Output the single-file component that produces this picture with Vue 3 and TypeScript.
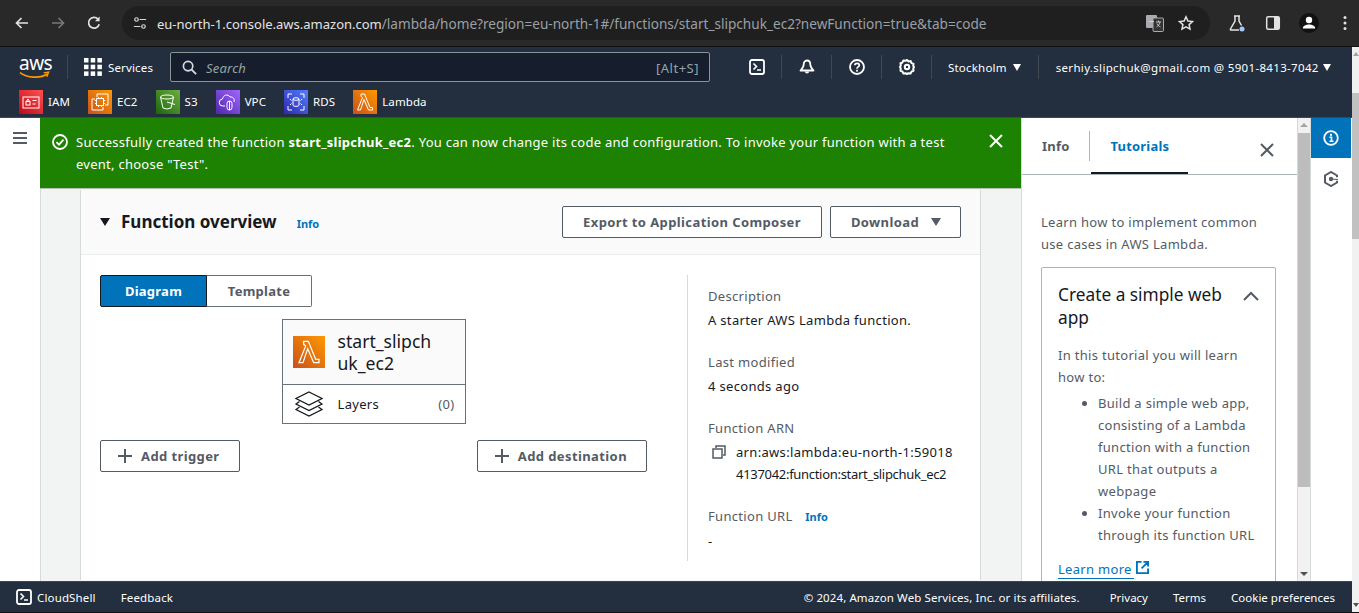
<script setup lang="ts">
interface Shortcut {
  name: string
  from: string
  to: string
  icon: string
}

const shortcuts: Shortcut[] = [
  { name: 'IAM', from: '#bd0816', to: '#ff5252', icon: 'iam' },
  { name: 'EC2', from: '#c8511b', to: '#ff9900', icon: 'ec2' },
  { name: 'S3', from: '#1b660f', to: '#6cae3e', icon: 's3' },
  { name: 'VPC', from: '#4d27a8', to: '#a166ff', icon: 'vpc' },
  { name: 'RDS', from: '#2e27ad', to: '#527fff', icon: 'rds' },
  { name: 'Lambda', from: '#c8511b', to: '#ff9900', icon: 'lambda' }
]

const details = [
  { label: 'Description', value: 'A starter AWS Lambda function.' },
  { label: 'Last modified', value: '4 seconds ago' }
]

const steps = [
  'Build a simple web app, consisting of a Lambda function with a function URL that outputs a webpage',
  'Invoke your function through its function URL'
]
</script>

<template>
  <div class="window">
    <!-- BROWSER -->
    <header class="browser">
      <svg class="b-icon" viewBox="0 0 16 16"><path d="M14 8H3M7.5 3 2.5 8l5 5" fill="none" stroke="#e3e3e3" stroke-width="1.7" /></svg>
      <svg class="b-icon" viewBox="0 0 16 16"><path d="M2 8h11M8.5 3l5 5-5 5" fill="none" stroke="#77787a" stroke-width="1.7" /></svg>
      <svg class="b-icon" viewBox="0 0 16 16"><path d="M13.2 9.2A5.4 5.4 0 1 1 12 4.1" fill="none" stroke="#e3e3e3" stroke-width="1.7" /><path d="M13.6 1.6v4.6H9z" fill="#e3e3e3" /></svg>
      <div class="omnibox">
        <svg class="tune" viewBox="0 0 16 16"><circle cx="4" cy="4" r="2" fill="none" stroke="#d5d5d5" stroke-width="1.4" /><path d="M7.5 4H15M1 12h7.5" stroke="#d5d5d5" stroke-width="1.4" /><circle cx="12" cy="12" r="2" fill="none" stroke="#d5d5d5" stroke-width="1.4" /></svg>
        <span class="url"><span class="host">eu-north-1.console.aws.amazon.com</span>/lambda/home?region=eu-north-1#/functions/start_slipchuk_ec2?newFunction=true&amp;tab=code</span>
        <svg class="translate" viewBox="0 0 18 18"><rect x="0" y="1" width="11" height="13" rx="1" fill="#a9abae" /><rect x="7" y="4" width="10.500" height="13.500" rx="1" fill="#333" stroke="#a9abae" /><path d="M3 7.500h5M10 8h5M12.500 6.500v1.500M14 8c-.5 2.500-2 4-3.500 5M11 9.500c.7 1.500 2 3 3.500 3.500" fill="none" stroke="#d5d5d5" stroke-width=".9" /></svg>
        <svg class="star" viewBox="0 0 16 16"><path d="m8 1.800 1.900 4.200 4.600.5-3.400 3.100.9 4.500L8 11.800l-4 2.300.9-4.500L1.500 6.500 6.100 6z" fill="none" stroke="#e3e3e3" stroke-width="1.500" /></svg>
      </div>
      <div class="b-tools">
        <svg class="flask" viewBox="0 0 18 18"><path d="M6 2h6M7 2v5l-4.500 8q-.4 1 .7 1H11M11 2v5l2.500 4.500" fill="none" stroke="#e3e3e3" stroke-width="1.500" /><circle cx="14" cy="15" r="2.500" fill="#a8c7fa" /></svg>
        <svg class="side" viewBox="0 0 16 16"><rect x="1.700" y="1.700" width="12.600" height="12.600" rx="1.500" fill="none" stroke="#e3e3e3" stroke-width="1.500" /><rect x="9" y="2" width="5" height="12" fill="#e3e3e3" /></svg>
        <span class="avatar"><svg viewBox="0 0 20 20"><circle cx="10" cy="7" r="3.200" fill="#fff" /><path d="M3.800 15.500c0-2.800 3.500-3.900 6.200-3.900s6.200 1.100 6.200 3.900z" fill="#fff" /></svg></span>
        <svg class="dots" viewBox="0 0 4 16"><circle cx="2" cy="2.500" r="1.500" fill="#e3e3e3" /><circle cx="2" cy="8" r="1.500" fill="#e3e3e3" /><circle cx="2" cy="13.500" r="1.500" fill="#e3e3e3" /></svg>
      </div>
    </header>

    <div class="console">
      <div class="page">
        <!-- TOP NAV -->
        <nav class="topnav">
          <div class="nav-row">
            <div class="logo">
              <span class="logo-text">aws</span>
              <svg class="smile" viewBox="0 0 32 9"><path d="M1 1.500C8 7 22 8 29 3" fill="none" stroke="#f90" stroke-width="1.800" /><path d="m25.500 1.800 5-.8-1.800 4.800" fill="none" stroke="#f90" stroke-width="1.500" /></svg>
            </div>
            <span class="nav-sep first"></span>
            <svg class="grid-icon" viewBox="0 0 18 18"><g fill="#fff"><rect width="4.500" height="4.500" /><rect x="6.700" width="4.500" height="4.500" /><rect x="13.400" width="4.500" height="4.500" /><rect y="6.700" width="4.500" height="4.500" /><rect x="6.700" y="6.700" width="4.500" height="4.500" /><rect x="13.400" y="6.700" width="4.500" height="4.500" /><rect y="13.400" width="4.500" height="4.500" /><rect x="6.700" y="13.400" width="4.500" height="4.500" /><rect x="13.400" y="13.400" width="4.500" height="4.500" /></g></svg>
            <span class="nav-text services">Services</span>
            <div class="search">
              <svg class="search-icon" viewBox="0 0 16 16"><circle cx="6.500" cy="6.500" r="5" fill="none" stroke="#d5dbdb" stroke-width="1.800" /><path d="m10 10 5 5" stroke="#d5dbdb" stroke-width="2" /></svg>
              <span class="search-text">Search</span>
              <span class="search-key">[Alt+S]</span>
            </div>
            <svg class="nav-icon" viewBox="0 0 16 16"><rect x="1" y="1" width="14" height="14" rx="2" fill="none" stroke="#fff" stroke-width="1.800" /><path d="m4.500 4.500 3 3-3 3M8 11h4" fill="none" stroke="#fff" stroke-width="1.600" /></svg>
            <span class="nav-sep"></span>
            <svg class="nav-icon" viewBox="0 0 16 16"><path d="M8 1.500c-2.300 0-3.300 1.800-3.300 4 0 2-1.200 3.800-3.200 6h13c-2-2.200-3.200-4-3.200-6 0-2.200-1-4-3.300-4z" fill="none" stroke="#fff" stroke-width="1.800" stroke-linejoin="round" /><path d="M5.800 12.500c.3 2.600 4.100 2.600 4.400 0z" fill="#fff" /></svg>
            <span class="nav-sep"></span>
            <svg class="nav-icon" viewBox="0 0 16 16"><circle cx="8" cy="8" r="7" fill="none" stroke="#fff" stroke-width="1.800" /><path d="M5.800 6.200C5.800 3.700 10.300 3.700 10.300 6.200c0 1.800-2.300 1.700-2.300 3.600" fill="none" stroke="#fff" stroke-width="1.700" /><rect x="7.100" y="10.800" width="1.800" height="1.800" fill="#fff" /></svg>
            <span class="nav-sep"></span>
            <svg class="nav-icon" viewBox="0 0 16 16"><path d="m8 1 1.600 1.400 2.100-.3.800 2 2 .8-.3 2.100L15 8l-.8 1.600.3 2.100-2 .8-.8 2-2.100-.3L8 15l-1.600-.8-2.100.3-.8-2-2-.8.3-2.100L1 8l.8-1.600-.3-2.100 2-.8.8-2 2.100.3z" fill="none" stroke="#fff" stroke-width="2" stroke-linejoin="round" /><circle cx="8" cy="8" r="2.200" fill="none" stroke="#fff" stroke-width="2" /></svg>
            <span class="nav-sep"></span>
            <span class="nav-text region">Stockholm</span>
            <span class="caret"></span>
            <span class="nav-sep account-sep"></span>
            <span class="nav-text account">serhiy.slipchuk@gmail.com @ 5901-8413-7042</span>
            <span class="caret last"></span>
          </div>
          <div class="shortcuts">
            <div v-for="item in shortcuts" :key="item.name" class="shortcut">
              <span class="service-icon" :style="{ background: `linear-gradient(45deg, ${item.from}, ${item.to})` }">
                <svg viewBox="0 0 24 24" fill="none" stroke="#fff" stroke-width="1">
                  <template v-if="item.icon === 'iam'">
                    <rect x="4" y="7" width="16" height="11" /><rect x="7" y="11.500" width="4" height="3.500" /><path d="M8 11.500V10q1-1.500 2 0v1.500M13.500 10.500h4M13.500 14h3" />
                  </template>
                  <template v-else-if="item.icon === 'ec2'">
                    <path d="M9 7V4h11v11h-3M7 9H4v11h11v-3" /><rect x="8.500" y="8.500" width="7" height="7" /><path d="M7 10.500h1.500M7 13.500h1.500M15.500 10.500H17M15.500 13.500H17M10.500 7v1.500M13.500 7v1.500M10.500 15.500V17M13.500 15.500V17" />
                  </template>
                  <template v-else-if="item.icon === 's3'">
                    <ellipse cx="11" cy="7" rx="6.500" ry="2" /><path d="M4.500 7 7 18q4 2 8 0l2.500-11M11 12l8 2.500" />
                  </template>
                  <template v-else-if="item.icon === 'vpc'">
                    <path d="M9 16H7a3.500 3.500 0 0 1-.5-7C7 5 12 3.500 14 7c3-.5 5 2 4 5" /><rect x="11" y="11" width="5" height="9" rx="2.500" /><path d="M13.500 11v9" />
                  </template>
                  <template v-else-if="item.icon === 'rds'">
                    <path d="M4 8V4h4M16 4h4v4M20 16v4h-4M8 20H4v-4" /><ellipse cx="12" cy="9" rx="3" ry="1.300" /><path d="M9 9v6c0 1.800 6 1.800 6 0V9M6 9l1.500 1.500M18 9l-1.500 1.500M6 15l1.500-1.500M18 15l-1.500-1.500" />
                  </template>
                  <path v-else d="M8 4h3.500L17 17.500h2.500V20h-4L11 9.500 7.500 20H4.500l5-12.500L8.500 6.500H8z" />
                </svg>
              </span>
              <span class="nav-text">{{ item.name }}</span>
            </div>
          </div>
        </nav>

        <div class="body">
          <aside class="sidenav">
            <svg class="burger" viewBox="0 0 14 12"><path d="M0 1h14M0 6h14M0 11h14" stroke="#545b64" stroke-width="2" /></svg>
          </aside>

          <main class="content">
            <div class="flash">
              <svg class="flash-icon" viewBox="0 0 16 16"><circle cx="8" cy="8" r="7" fill="none" stroke="#fff" stroke-width="1.800" /><path d="m4.500 8.200 2.500 2.500 4.500-5" fill="none" stroke="#fff" stroke-width="1.800" /></svg>
              <p>Successfully created the function <b>start_slipchuk_ec2</b>. You can now change its code and configuration. To invoke your function with a test event, choose "Test".</p>
              <svg class="flash-close" viewBox="0 0 14 14"><path d="m1 1 12 12M13 1 1 13" stroke="#fff" stroke-width="2" /></svg>
            </div>

            <section class="card">
              <div class="card-head">
                <span class="tri"></span>
                <h2>Function overview</h2>
                <a class="info">Info</a>
                <button class="btn export">Export to Application Composer</button>
                <button class="btn download">Download <span class="btn-caret"></span></button>
              </div>
              <div class="card-body">
                <div class="diagram">
                  <div class="segments">
                    <span class="seg active">Diagram</span>
                    <span class="seg">Template</span>
                  </div>
                  <div class="fn-box">
                    <div class="fn-top">
                      <span class="fn-icon">
                        <svg viewBox="0 0 24 24" fill="none" stroke="#fff" stroke-width=".9"><path d="M8 4h3.500L17 17.500h2.500V20h-4L11 9.500 7.500 20H4.500l5-12.500L8.500 6.500H8z" /></svg>
                      </span>
                      <span class="fn-name">start_slipchuk_ec2</span>
                    </div>
                    <div class="fn-layers">
                      <svg class="layers" viewBox="0 0 28 26" fill="none" stroke="#16191f" stroke-width="1.300"><path d="m14 1 13 6.500L14 14 1 7.500z" /><path d="M4.500 10.500 1 13l13 6.500L27 13l-3.500-2.500" /><path d="M4.500 16 1 18.500 14 25l13-6.500-3.500-2.500" /></svg>
                      <span class="layers-label">Layers</span>
                      <span class="layers-count">(0)</span>
                    </div>
                  </div>
                  <div class="add-row">
                    <button class="btn add"><svg viewBox="0 0 14 14"><path d="M7 0v14M0 7h14" stroke="#545b64" stroke-width="2" /></svg>Add trigger</button>
                    <button class="btn add"><svg viewBox="0 0 14 14"><path d="M7 0v14M0 7h14" stroke="#545b64" stroke-width="2" /></svg>Add destination</button>
                  </div>
                </div>
                <div class="meta">
                  <div v-for="row in details" :key="row.label" class="meta-item">
                    <div class="meta-label">{{ row.label }}</div>
                    <div>{{ row.value }}</div>
                  </div>
                  <div class="meta-item">
                    <div class="meta-label">Function ARN</div>
                    <div class="arn">
                      <svg class="copy" viewBox="0 0 14 14" fill="none" stroke="#545b64" stroke-width="1.500"><path d="M4 3V1h9v9h-2" /><rect x="1" y="4" width="9" height="9" /></svg>
                      <span class="arn-text">arn:aws:lambda:eu-north-1:59018<wbr /><span class="arn-tail">4137042:function:start_slipchuk_ec2</span></span>
                    </div>
                  </div>
                  <div class="meta-item">
                    <div class="meta-label">Function URL <a class="info url-info">Info</a></div>
                    <div>-</div>
                  </div>
                </div>
              </div>
            </section>
          </main>

          <aside class="tools">
            <div class="tools-tabs">
              <span class="tab">Info</span>
              <span class="tab-sep"></span>
              <span class="tab current">Tutorials</span>
              <svg class="tools-close" viewBox="0 0 14 14"><path d="m1 1 12 12M13 1 1 13" stroke="#545b64" stroke-width="2" /></svg>
            </div>
            <div class="tools-body">
              <p class="intro">Learn how to implement common use cases in AWS Lambda.</p>
              <div class="tutorial">
                <div class="tutorial-head">
                  <h3>Create a simple web app</h3>
                  <svg class="chevron" viewBox="0 0 16 10"><path d="m1 9 7-7 7 7" fill="none" stroke="#545b64" stroke-width="2" /></svg>
                </div>
                <p class="lead">In this tutorial you will learn how to:</p>
                <ul>
                  <li v-for="step in steps" :key="step">{{ step }}</li>
                </ul>
                <a class="learn">Learn more</a>
                <svg class="external" viewBox="0 0 14 14" fill="none" stroke="#0073bb" stroke-width="2"><path d="M6 1H1v12h12V8M8 1h5v5M13 1 6 8" /></svg>
              </div>
            </div>
          </aside>

          <div class="tools-scroll">
            <span class="arrow up"></span>
            <span class="thumb"></span>
            <span class="arrow down"></span>
          </div>

          <aside class="rail">
            <div class="rail-btn active">
              <svg viewBox="0 0 16 16"><circle cx="8" cy="8" r="6.800" fill="none" stroke="#fff" stroke-width="1.800" /><path d="M6.500 7.300H8.500V11M6.500 11.300h4" fill="none" stroke="#fff" stroke-width="1.600" /><rect x="7" y="3.800" width="2" height="2" fill="#fff" /></svg>
            </div>
            <div class="rail-btn second">
              <svg viewBox="0 0 16 16"><path d="M14 6.300V4.500L8 1 2 4.500v7L8 15l6-3.500V9.700" fill="none" stroke="#545b64" stroke-width="2" /><circle cx="8" cy="8" r="2.200" fill="#545b64" /><path d="m8 8 7 .5" stroke="#545b64" stroke-width="1.200" /></svg>
            </div>
          </aside>
        </div>

        <footer class="footer">
          <svg class="foot-shell" viewBox="0 0 16 16"><rect x="1" y="1" width="14" height="14" rx="2" fill="none" stroke="#fff" stroke-width="1.800" /><path d="m4.500 4.500 3 3-3 3M8 11h4" fill="none" stroke="#fff" stroke-width="1.600" /></svg>
          <span class="foot-left">CloudShell</span>
          <span class="foot-left">Feedback</span>
          <span class="copyright">© 2024, Amazon Web Services, Inc. or its affiliates.</span>
          <span>Privacy</span>
          <span>Terms</span>
          <span>Cookie preferences</span>
        </footer>
      </div>

      <div class="page-scroll">
        <span class="arrow up"></span>
        <span class="page-thumb"></span>
        <span class="arrow down"></span>
      </div>
    </div>
  </div>
</template>

<style>
html,
body {
  margin: 0;
  overflow: hidden;
}
</style>

<style scoped>
.window {
  display: flex;
  flex-direction: column;
  width: 1359px;
  height: 613px;
  box-sizing: border-box;
  overflow: hidden;
  border-bottom: 1px solid #111;
  font-family: 'Noto Sans', 'Open Sans', sans-serif;
  font-size: 13px;
  color: #16191f;
  background: #fff;
}

p,
h2,
h3,
ul {
  margin: 0;
}

/* browser */
.browser {
  flex: none;
  display: flex;
  align-items: center;
  height: 47px;
  box-sizing: border-box;
  padding-left: 14px;
  background: #292929;
  border-bottom: 1px solid #111;
}

.b-icon {
  width: 16px;
  height: 16px;
  margin-right: 20px;
}

.omnibox {
  display: flex;
  align-items: center;
  width: 1088px;
  height: 34px;
  box-sizing: border-box;
  padding-left: 11px;
  border-radius: 17px;
  background: #1f1f1f;
}

.tune {
  width: 14px;
  height: 14px;
  margin-right: 10px;
}

.url {
  flex: 1;
  font-size: 13.600px;
  color: #9aa0a6;
  white-space: nowrap;
}

.host {
  font-size: 13px;
  color: #e3e3e3;
}

.translate {
  width: 18px;
  height: 18px;
  margin-right: 14px;
}

.star {
  width: 16px;
  height: 16px;
  margin-right: 16px;
}

.b-tools {
  display: flex;
  align-items: center;
}

.flask {
  width: 18px;
  height: 18px;
  margin-left: 18px;
}

.side {
  width: 16px;
  height: 16px;
  margin-left: 19px;
}

.avatar {
  display: flex;
  width: 20px;
  height: 20px;
  margin-left: 18px;
  border-radius: 50%;
  background: #111;
}

.dots {
  width: 4px;
  height: 16px;
  margin-left: 24px;
}

/* console */
.console {
  flex: 1;
  display: flex;
  min-height: 0;
}

.page {
  flex: 1;
  display: flex;
  flex-direction: column;
  min-width: 0;
}

.topnav {
  flex: none;
  height: 71px;
  box-sizing: border-box;
  background: #232f3e;
  border-bottom: 1px solid #414750;
}

.nav-row {
  display: flex;
  align-items: center;
  height: 40px;
  padding-left: 19px;
}

.nav-text {
  font-size: 11.500px;
  color: #fff;
  white-space: nowrap;
}

.logo {
  position: relative;
  width: 31px;
  height: 26px;
}

.logo-text {
  display: block;
  font-size: 19px;
  line-height: 19px;
  color: #fff;
  letter-spacing: -0.5px;
}

.smile {
  position: absolute;
  left: 0;
  top: 17px;
  width: 31px;
  height: 9px;
}

.nav-sep {
  width: 1px;
  height: 24px;
  margin: 0 17px 0 16px;
  background: #414750;
}

.nav-sep.first {
  margin: 0 16px 0 17px;
}

.grid-icon {
  width: 18px;
  height: 18px;
}

.services {
  width: 46px;
  margin-left: 6px;
  letter-spacing: 0.15px;
}

.search {
  display: flex;
  align-items: center;
  width: 540px;
  height: 30px;
  margin-left: 16px;
  margin-right: 39px;
  box-sizing: border-box;
  padding: 0 10px 0 11px;
  background: #161e2d;
  border: 1px solid #879596;
  border-radius: 2px;
}

.search-icon {
  width: 15px;
  height: 15px;
  margin-right: 9px;
}

.search-text {
  flex: 1;
  margin-top: 2px;
  font-size: 13px;
  font-style: italic;
  letter-spacing: 0.2px;
  color: #95a5a6;
}

.search-key {
  margin-top: 2px;
  font-size: 13px;
  letter-spacing: 0.5px;
  color: #95a5a6;
}

.nav-icon {
  width: 16px;
  height: 16px;
}

.region {
  margin-left: -1px;
  letter-spacing: 0.2px;
}

.account {
  letter-spacing: 0.33px;
}

.caret {
  width: 0;
  height: 0;
  margin-left: 6px;
  border-left: 4.500px solid transparent;
  border-right: 4.500px solid transparent;
  border-top: 7px solid #fff;
}

.caret.last {
  margin-left: 4px;
}

.account-sep {
  margin-left: 17px;
}

.shortcuts {
  display: flex;
  align-items: center;
  gap: 18px;
  height: 30px;
  padding-left: 19px;
}

.shortcut {
  display: flex;
  align-items: center;
  gap: 5px;
}

.shortcut .nav-text {
  margin-top: -2px;
  letter-spacing: 0.1px;
}

.service-icon {
  display: block;
  width: 24px;
  height: 24px;
}

/* body */
.body {
  flex: 1;
  display: flex;
  min-height: 0;
}

.sidenav {
  flex: none;
  width: 40px;
  background: #fff;
}

.burger {
  display: block;
  width: 14px;
  height: 12px;
  margin: 14px 0 0 13px;
}

.content {
  flex: none;
  width: 981px;
  overflow: hidden;
  background: #f2f3f3;
  box-shadow: inset 1px 0 #d5dbdb;
  letter-spacing: 0.32px;
}

.flash {
  display: flex;
  align-items: flex-start;
  height: 71px;
  box-sizing: border-box;
  padding: 13px 18px 0 12px;
  background: #1d8102;
  color: #fff;
  font-size: 13px;
  line-height: 22px;
  letter-spacing: 0.26px;
  border-bottom: 1px solid #b5c0b2;
}

.flash-icon {
  flex: none;
  width: 16px;
  height: 16px;
  margin: 3px 8px 0 0;
}

.flash p {
  flex: 1;
  padding-right: 24px;
}

.flash-close {
  flex: none;
  width: 14px;
  height: 14px;
  margin-top: 3px;
}

.card {
  width: 901px;
  margin: 1px 0 0 40px;
  box-sizing: border-box;
  background: #fff;
  border-left: 1px solid #d5dbdb;
  border-right: 1px solid #d5dbdb;
}

.card-head {
  display: flex;
  align-items: center;
  height: 65px;
  box-sizing: border-box;
  padding: 0 19px;
  background: #fafafa;
  border-bottom: 1px solid #eaeded;
}

.tri {
  width: 0;
  height: 0;
  margin-right: 11px;
  border-left: 5.500px solid transparent;
  border-right: 5.500px solid transparent;
  border-top: 8px solid #16191f;
}

h2 {
  margin-bottom: 2px;
  font-size: 17px;
  font-weight: 700;
  letter-spacing: 0;
}

.info {
  font-size: 11px;
  font-weight: 700;
  letter-spacing: 0;
  color: #0073bb;
}

.card-head .info {
  margin: 3px 0 0 20px;
}

.btn {
  display: inline-flex;
  align-items: center;
  justify-content: center;
  height: 32px;
  box-sizing: border-box;
  padding: 0;
  background: #fff;
  border: 1px solid #545b64;
  border-radius: 2px;
  font-family: inherit;
  font-size: 13px;
  font-weight: 700;
  letter-spacing: 0.4px;
  color: #545b64;
}

.export {
  width: 260px;
  margin-left: auto;
}

.download {
  width: 131px;
  margin-left: 8px;
  padding-left: 1px;
  gap: 12px;
}

.btn-caret {
  width: 0;
  height: 0;
  border-left: 5.500px solid transparent;
  border-right: 5.500px solid transparent;
  border-top: 8px solid #545b64;
}

.card-body {
  display: flex;
  padding: 20px 19px 19px;
}

.diagram {
  width: 547px;
  margin-right: 40px;
}

.segments {
  display: flex;
  width: 212px;
  height: 32px;
}

.seg {
  flex: none;
  width: 105px;
  display: flex;
  align-items: center;
  justify-content: center;
  box-sizing: border-box;
  border: 1px solid #687078;
  border-left: 0;
  border-radius: 0 2px 2px 0;
  font-size: 13px;
  font-weight: 700;
  letter-spacing: 0.25px;
  color: #545b64;
}

.seg.active {
  width: 107px;
  background: #0073bb;
  border: 1px solid #16191f;
  border-radius: 2px 0 0 2px;
  color: #fff;
}

.fn-box {
  width: 184px;
  margin: 12px auto 0;
  box-sizing: border-box;
  border: 1px solid #687078;
}

.fn-top {
  display: flex;
  align-items: center;
  height: 64px;
  padding-left: 10px;
  background: #fafafa;
  border-bottom: 1px solid #687078;
}

.fn-icon {
  flex: none;
  display: block;
  width: 32px;
  height: 32px;
  margin-right: 13px;
  background: linear-gradient(45deg, #c8511b, #ff9900);
}

.fn-name {
  width: 100px;
  font-size: 17.600px;
  line-height: 22px;
  letter-spacing: 0;
  overflow-wrap: anywhere;
}

.fn-layers {
  display: flex;
  align-items: center;
  height: 38px;
  padding: 0 10px 0 12px;
}

.layers {
  width: 28px;
  height: 26px;
  margin-right: 15px;
}

.layers-label {
  flex: 1;
}

.layers-count {
  color: #545b64;
}

.add-row {
  display: flex;
  justify-content: space-between;
  margin-top: 16px;
}

.add {
  gap: 9px;
  padding: 0 19px 0 17px;
}

.add svg {
  width: 14px;
  height: 14px;
}

.meta {
  flex: 1;
  width: 274px;
  height: 286px;
  box-sizing: border-box;
  padding: 10px 0 0 20px;
  border-left: 1px solid #d5dbdb;
  line-height: 22px;
}

.meta-item {
  margin-bottom: 20px;
}

.meta-label {
  margin-bottom: 2px;
  color: #545b64;
}

.url-info {
  margin-left: 9px;
}

.arn {
  display: flex;
  padding-left: 4px;
}

.copy {
  flex: none;
  width: 14px;
  height: 14px;
  margin: 4px 10px 0 0;
}

.arn-text {
  width: 224px;
}

.arn-tail {
  letter-spacing: -0.3px;
  white-space: nowrap;
}

/* tools panel */
.tools {
  flex: none;
  width: 276px;
  overflow: hidden;
  background: #fff;
  border-left: 1px solid #d5dbdb;
  box-sizing: border-box;
  letter-spacing: 0.3px;
}

.tools-tabs {
  display: flex;
  align-items: center;
  height: 57px;
  box-sizing: border-box;
  padding-left: 20px;
  border-bottom: 1px solid #aab7b8;
  position: relative;
}

.tab {
  font-size: 13px;
  font-weight: 700;
  letter-spacing: 0.2px;
  color: #545b64;
}

.tab-sep {
  width: 1px;
  height: 30px;
  margin: 0 20px;
  background: #aab7b8;
}

.tab.current {
  color: #0073bb;
}

.tab.current::after {
  content: '';
  position: absolute;
  left: 69px;
  bottom: 0;
  width: 97px;
  height: 2px;
  background: #16191f;
}

.tools-close {
  position: absolute;
  left: 238px;
  top: 25px;
  width: 14px;
  height: 14px;
}

.tools-body {
  padding: 36px 19px 0;
  line-height: 22px;
  color: #545b64;
}

.tutorial {
  width: 235px;
  margin-top: 12px;
  padding: 16px 16px 0;
  height: 340px;
  border: 1px solid #aab7b8;
  border-radius: 2px;
  box-sizing: border-box;
}

.tutorial-head {
  display: flex;
  align-items: flex-start;
  justify-content: space-between;
  margin-bottom: 15px;
}

h3 {
  width: 175px;
  font-size: 17.300px;
  font-weight: 400;
  line-height: 22.500px;
  letter-spacing: 0;
  color: #16191f;
}

.chevron {
  width: 16px;
  height: 10px;
  margin: 7px 0 0 0;
}

.lead {
  padding-right: 6px;
}

ul {
  margin-top: 4px;
  padding-left: 40px;
  margin-bottom: 12px;
}

.learn {
  color: #0073bb;
  border-bottom: 1px solid #0073bb;
  padding-right: 2px;
}

.external {
  width: 13px;
  height: 13px;
  margin-left: 2px;
}

.tools-scroll {
  flex: none;
  display: flex;
  flex-direction: column;
  align-items: center;
  width: 14px;
  background: #f1f1f1;
  border-left: 1px solid #d5dbdb;
  border-right: 1px solid #d5dbdb;
  box-sizing: border-box;
}

.thumb {
  width: 12px;
  height: 354px;
  margin-top: 6px;
  background: #bdbdbd;
}

.arrow {
  width: 0;
  height: 0;
  border-left: 4px solid transparent;
  border-right: 4px solid transparent;
}

.arrow.up {
  margin-top: 5px;
  border-bottom: 4px solid #a3a3a3;
}

.arrow.down {
  margin-top: auto;
  margin-bottom: 5px;
  border-top: 4px solid #505050;
}

.rail {
  flex: none;
  width: 41px;
  background: #fff;
}

.rail-btn {
  display: flex;
  align-items: center;
  justify-content: center;
  height: 40px;
}

.rail-btn.active {
  background: #0073bb;
  width: 40px;
}

.rail-btn.second {
  width: 40px;
  margin-top: 1px;
}

.rail-btn svg {
  width: 16px;
  height: 16px;
}

.footer {
  flex: none;
  display: flex;
  align-items: center;
  gap: 25px;
  height: 31px;
  box-sizing: border-box;
  padding: 0 17px 0 16px;
  background: #232f3e;
  border-top: 1px solid #414750;
  color: #fff;
  font-size: 11.500px;
}

.foot-shell {
  width: 16px;
  height: 16px;
  margin-right: -20px;
}

.foot-left {
  letter-spacing: 0.15px;
}

.copyright {
  margin-left: auto;
  margin-right: 5px;
  letter-spacing: 0.1px;
}

.page-scroll {
  flex: none;
  display: flex;
  flex-direction: column;
  align-items: center;
  width: 7px;
  background: #f1f1f1;
}

.page-thumb {
  width: 7px;
  height: 146px;
  margin-top: 37px;
  background: #c1c1c1;
}

.page-scroll .arrow {
  border-left-width: 3.500px;
  border-right-width: 3.500px;
}
</style>
